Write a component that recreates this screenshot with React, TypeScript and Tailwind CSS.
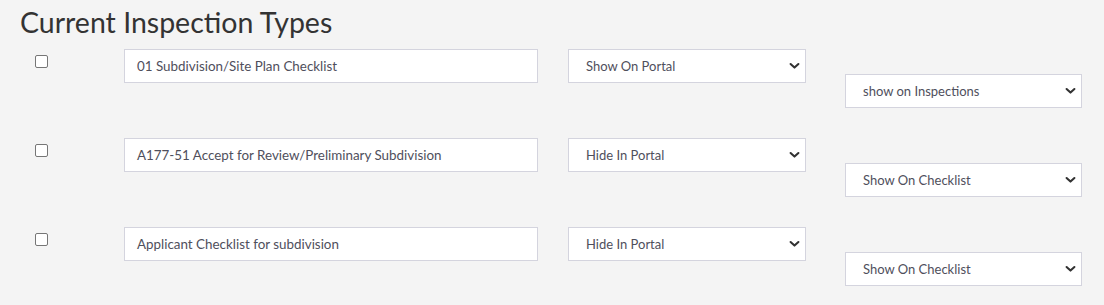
import React from "react";

const Chevron = () => (
  <svg width="11" height="7" viewBox="0 0 11 7" className="absolute right-[5px] top-1/2 -translate-y-1/2" aria-hidden>
    <path d="M1.6 1.5 L5.5 5.1 L9.4 1.5" fill="none" stroke="#333" strokeWidth="2.1" strokeLinecap="round" strokeLinejoin="round" />
  </svg>
);

const Select = ({ value, className }: { value: string; className?: string }) => (
  <div className={`relative h-[34px] border border-[#d4d4de] bg-white flex items-center pl-[17px] pt-[1px] text-[13px] text-[#4f4f5c] ${className ?? ""}`}>
    <span>{value}</span>
    <Chevron />
  </div>
);

const rows = [
  { name: "01 Subdivision/Site Plan Checklist", portal: "Show On Portal", other: "show on Inspections" },
  { name: "A177-51 Accept for Review/Preliminary Subdivision", portal: "Hide In Portal", other: "Show On Checklist" },
  { name: "Applicant Checklist for subdivision", portal: "Hide In Portal", other: "Show On Checklist" },
];

export default function App() {
  return (
    <div className="w-[1104px] h-[305px] bg-[#f4f4f4] overflow-hidden" style={{ fontFamily: "Lato, 'Noto Sans', sans-serif" }}>
      <h2 className="pl-[20px] pt-[4px] text-[28.5px] leading-[36px] text-[#333]">Current Inspection Types</h2>
      <div className="mt-[9px] flex flex-col gap-[30px]">
        {rows.map((r) => (
          <div key={r.name} className="flex items-start">
            <div className="ml-[35px] mt-[6px] w-[13px] h-[13px] border border-[#767676] rounded-[2px] bg-white" />
            <div className="ml-[76px] w-[414px] h-[34px] border border-[#d4d4de] bg-white flex items-center pl-[12px] pt-[1px] text-[13.4px] text-[#4f4f5c]">
              {r.name}
            </div>
            <Select value={r.portal} className="ml-[30px] w-[238px]" />
            <Select value={r.other} className="ml-[39px] mt-[25px] w-[237px]" />
          </div>
        ))}
      </div>
    </div>
  );
}
